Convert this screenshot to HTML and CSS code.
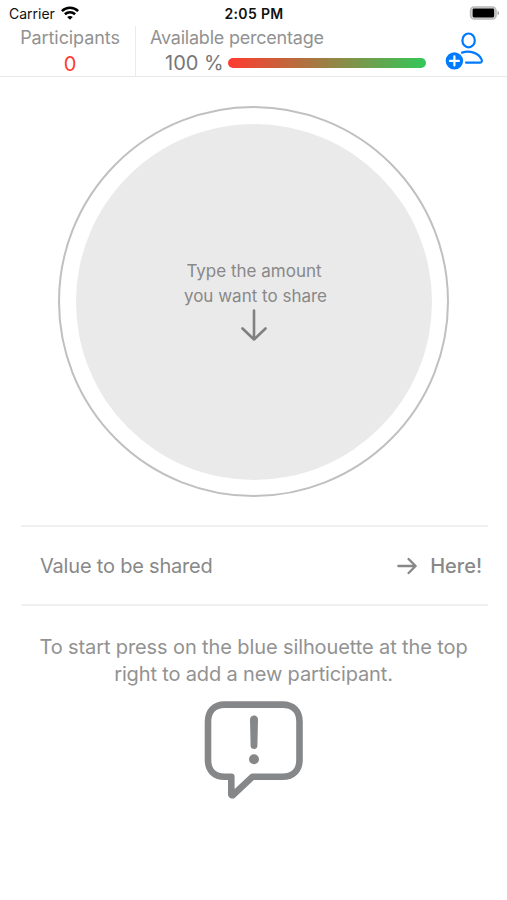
FILE: index.html
```html
<!DOCTYPE html>
<html lang="en">
<head>
<meta charset="utf-8">
<title>Share</title>
<link rel="stylesheet" href="styles.css">
</head>
<body>
<div class="status">
  <div class="carrier"><span>Carrier</span>
    <svg width="18" height="14" viewBox="0 0 18 14" fill="none" stroke="#000" stroke-width="2.6"><path d="M.9 5.1C5.4.7 12.6.7 17.1 5.1M3.9 8.3c2.9-2.7 7.3-2.7 10.2 0"/><path d="M9 13.8 6.2 11c1.5-1.5 4.100-1.500 5.600 0z" fill="#000" stroke="none"/></svg>
  </div>
  <div class="clock">2:05 PM</div>
  <svg class="battery" width="31" height="14" viewBox="0 0 31 14"><rect x="1.600" y="1" width="25.400" height="12" rx="3.600" fill="#ddd" stroke="#b8b8b8" stroke-width="1.600"/><rect x="3.600" y="2.500" width="21.600" height="9" rx="1.400"/><path d="M28.500 4.700c2.200.8 2.200 3.800 0 4.600z" fill="#aaa"/></svg>
</div>
<header class="header">
  <div class="participants"><span class="label part-label">Participants</span><span class="count">0</span></div>
  <div class="available">
    <span class="label avail-label">Available percentage</span>
    <div class="meter"><span class="percent">100 %</span><div class="bar"></div></div>
  </div>
  <svg class="add" width="40" height="40" viewBox="0 0 40 40" fill="none" stroke="#007aff" stroke-width="2.200"><ellipse cx="23.600" cy="9.400" rx="6.200" ry="6.900"/><path d="M17 21.600c8-2.600 16.500.4 19.400 6.500 1 2.100.5 3.500-1.500 3.500H21" stroke-linecap="round"/><circle cx="9.400" cy="29.900" r="8.700" fill="#007aff" stroke="none"/><path d="M4.900 29.900h9M9.400 25.400v9" stroke="#fff" stroke-linecap="round"/></svg>
</header>
<main>
  <div class="ring"><div class="disc">
    <p class="prompt"><span class="p1">Type the amount</span><br><span class="p2">you want to share</span></p>
    <svg width="28" height="34" viewBox="0 0 28 34" fill="none" stroke="#808080" stroke-width="2.600" stroke-linecap="round" stroke-linejoin="round"><path d="M14 2.500v29M2.500 20.500 14 31.500l11.500-11"/></svg>
  </div></div>
  <section class="value">
    <span class="value-label">Value to be shared</span>
    <svg width="20" height="18" viewBox="0 0 20 18" fill="none" stroke="#888" stroke-width="2.400" stroke-linecap="round" stroke-linejoin="round"><path d="M1.400 9h17.100M11.600 2l7 7-7 7"/></svg>
    <span class="here">Here!</span>
  </section>
  <section class="hint">
    <p><span class="h1">To start press on the blue silhouette at the top</span><br><span class="h2">right to add a new participant.</span></p>
    <svg width="100" height="100" viewBox="0 0 100 100" fill="none" stroke="#868789" stroke-width="6.600" stroke-linejoin="round"><path d="M20.500 4.600h58c10.500 0 17 6.500 17 17v38.100c0 10.500-6.500 17-17 17H48.600L29.200 94.900c-.8.700-1.900.4-1.900-.6V76.700h-6.800c-10.500 0-16.500-6.500-16.500-17V21.600c0-10.500 6-17 16.500-17z"/><path d="M46 19.400c0-5.200 8-5.200 8 0l-.6 26.500c0 4-6.800 4-6.800 0z" fill="#868789" stroke="none"/><circle cx="50" cy="59.200" r="5" fill="#868789" stroke="none"/></svg>
  </section>
</main>
</body>
</html>
```
FILE: styles.css
```css
* { box-sizing: border-box; }
body { margin: 0; width: 507px; height: 900px; overflow: hidden; background: #fff; color: #888; font-family: Inter, "Liberation Sans", sans-serif; }
p { margin: 0; }
svg { display: block; flex: none; }
span { white-space: nowrap; }
.status { height: 26px; display: grid; grid-template-columns: 1fr auto 1fr; align-items: center; padding: 1px 7px 0 9px; color: #111; font-size: 14px; }
.carrier { display: flex; align-items: center; gap: 6px; }
.carrier svg { margin-top: -2px; }
.clock { font-weight: 600; font-size: 14px; letter-spacing: 0.35px; padding-right: 1px; }
.battery { justify-self: end; margin-top: -1px; }
.header { height: 51px; display: flex; border-bottom: 1px solid #e8e8e8; }
.participants { width: 136px; border-right: 1px solid #ebebeb; display: flex; flex-direction: column; align-items: center; padding-left: 5px; }
.label { font-size: 18px; line-height: 24px; color: #929292; }
.part-label { letter-spacing: -0.08px; }
.avail-label { letter-spacing: -0.22px; }
.count { color: #ff3b30; font-size: 20px; line-height: 28px; }
.available { width: 310px; padding-left: 14px; display: flex; flex-direction: column; }
.meter { height: 25px; display: flex; align-items: center; padding-left: 15px; }
.percent { width: 63px; color: #777; font-size: 20px; line-height: 25px; padding-top: 2px; }
.bar { width: 198px; height: 10px; border-radius: 5px; background: linear-gradient(90deg, #ff3b30, #34c759); }
.add { margin: 5px 0 0 -1px; }
.ring { width: 391px; height: 391px; margin: 29px 0 0 58px; border: 2px solid #c0c0c0; border-radius: 50%; display: flex; align-items: center; justify-content: center; }
.disc { width: 356px; height: 356px; margin-left: 1px; border-radius: 50%; background: #eaeaea; display: flex; flex-direction: column; align-items: center; padding-top: 135px; }
.prompt { color: #888; font-size: 17px; line-height: 25px; height: 49px; text-align: center; padding-left: 3px; }
.p1 { padding-right: 3px; }
.value { width: 467px; height: 81px; margin: 28px 0 0 21px; border: solid #f0f0f0; border-width: 2px 0; display: flex; align-items: center; padding: 0 6px 0 19px; font-size: 20px; }
.value-label { letter-spacing: -0.2px; }
.value svg { margin: 0 13px 0 auto; }
.here { font-weight: 500; }
.hint { display: flex; flex-direction: column; align-items: center; padding-top: 28px; color: #929292; font-size: 20px; line-height: 27px; text-align: center; letter-spacing: -0.11px; }
.h2 { letter-spacing: -0.15px; }
.hint svg { margin-top: 12px; }
```
